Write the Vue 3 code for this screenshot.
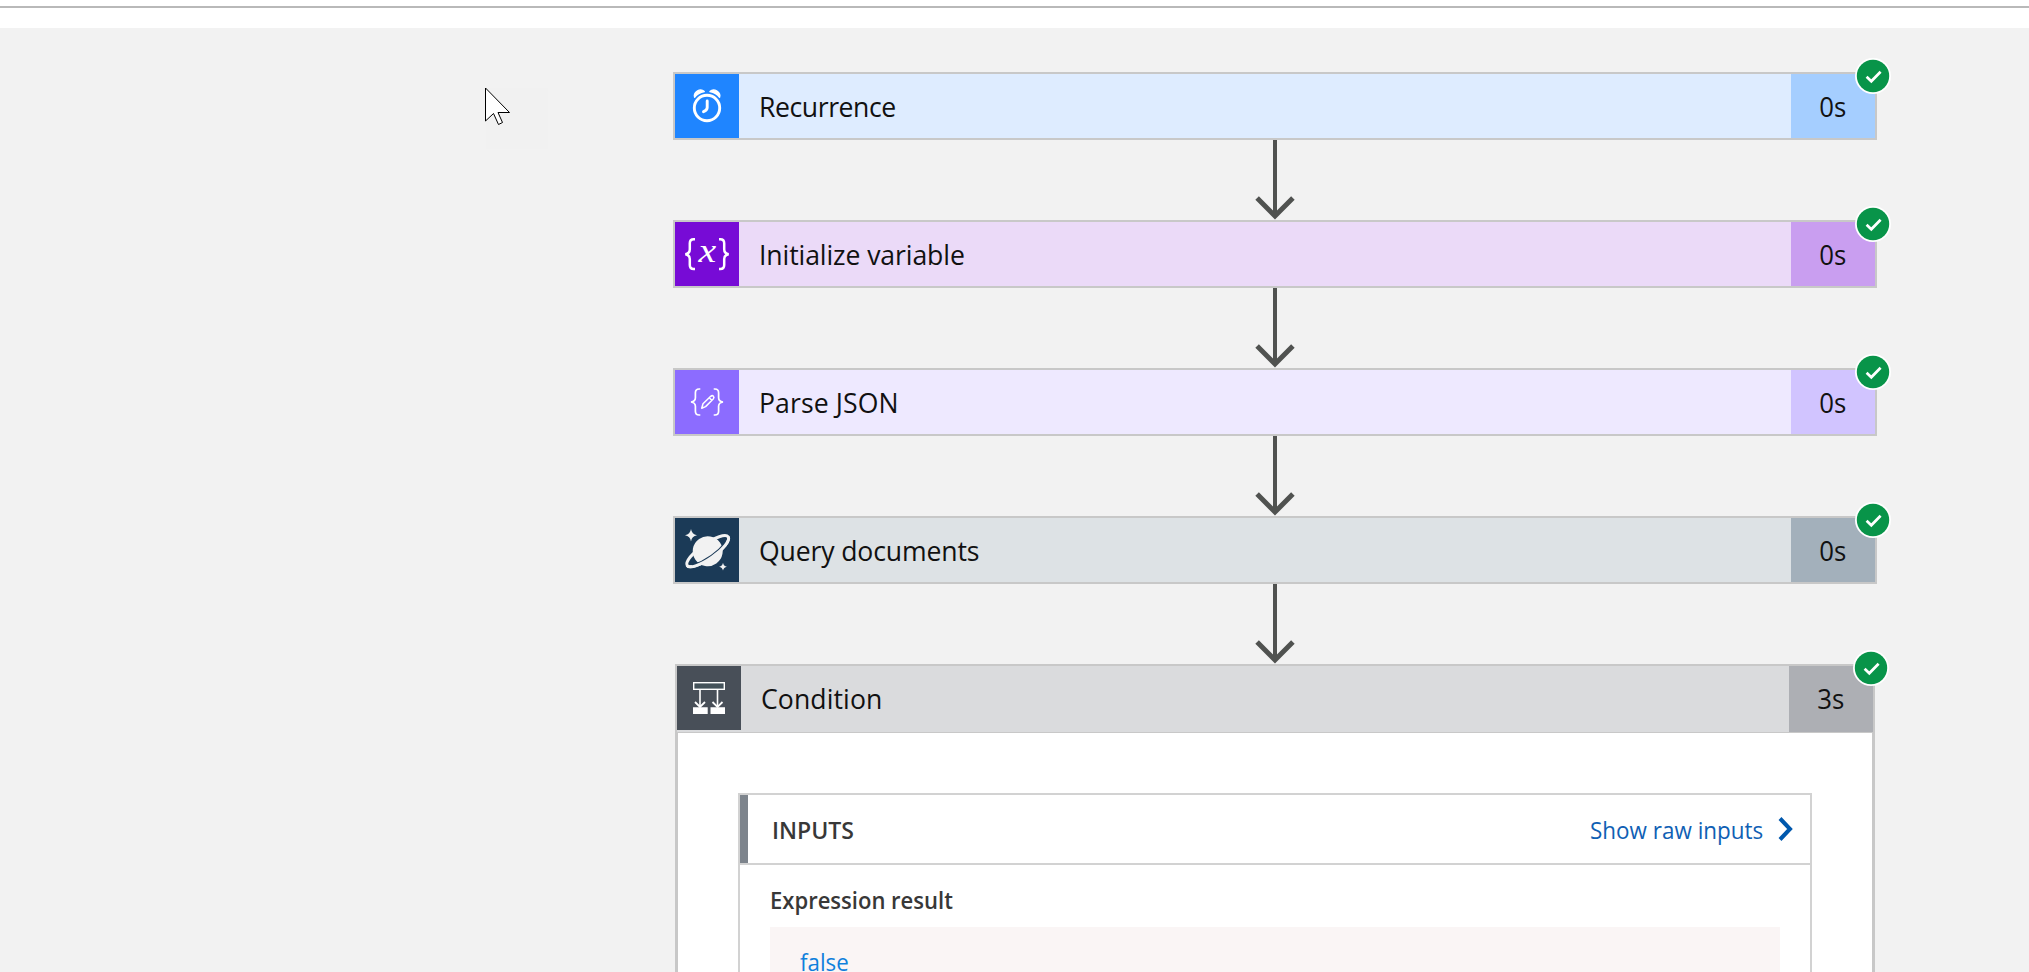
<script setup>
const steps = [
  { id: 'recurrence', title: 'Recurrence', time: '0s' },
  { id: 'variable', title: 'Initialize variable', time: '0s' },
  { id: 'json', title: 'Parse JSON', time: '0s' },
  { id: 'cosmos', title: 'Query documents', time: '0s' },
]
</script>

<template>
  <div class="page">
    <div class="topline"></div>
    <main class="canvas">
      <div class="flow">
        <template v-for="s in steps" :key="s.id">
          <section class="card" :class="s.id">
            <div class="icon">
              <svg v-if="s.id === 'recurrence'" width="64" height="64" viewBox="0 0 64 64" fill="none" stroke="#fff">
                <circle cx="32" cy="34" r="12.7" stroke-width="2.9" />
                <path d="M32.2 27v6.5q0 2.8-3.7 4.2" stroke-width="2.9" stroke-linecap="round" />
                <path d="M19.6 23.3C18 18.5 25 13.500 29.300 17.500C25.300 18.300 21.800 20.300 19.600 23.300Z M44.600 23.300C46.200 18.500 39.200 13.500 34.900 17.500C38.900 18.300 42.400 20.300 44.600 23.300Z" fill="#fff" stroke-width="1.300" stroke-linejoin="round" />
              </svg>
              <svg v-else-if="s.id === 'variable'" width="64" height="64" viewBox="0 0 64 64" fill="none" stroke="#fff" stroke-width="2.500">
                <path d="M20 17.300h-1.300q-3.900 0-3.900 4v6q0 4.300-4.500 4.900q4.500.6 4.500 4.900v6q0 4 3.900 4h1.300M44 17.300h1.300q3.900 0 3.900 4v6q0 4.300 4.500 4.900q-4.500.6-4.500 4.900v6q0 4-3.900 4h-1.300" />
                <text class="glyph" transform="translate(23.600 40) scale(1.170 1)">x</text>
              </svg>
              <svg v-else-if="s.id === 'json'" width="64" height="64" viewBox="0 0 64 64" fill="none" stroke="#fff" stroke-width="1.700">
                <path d="M25.300 19h-1.200q-3.700 0-3.700 3.800v4.900q0 3.700-4.400 4.300q4.400.6 4.400 4.300v4.900q0 3.800 3.700 3.800h1.200M38.700 19h1.200q3.700 0 3.700 3.800v4.900q0 3.700 4.400 4.300q-4.400.6-4.400 4.300v4.900q0 3.800-3.700 3.800h-1.200" />
                <path d="M26.700 38.200L28 33.800L35.700 26.300Q37.300 25 38.400 26.200Q39.600 27.500 38.200 29L30.600 36.600ZM34.300 27.800L36.800 30.300" stroke-width="1.500" stroke-linejoin="round" />
              </svg>
              <svg v-else width="64" height="64" viewBox="0 0 64 64" fill="none">
                <g transform="rotate(-35 32.700 33.200)">
                  <ellipse cx="32.700" cy="33.200" rx="25" ry="7.400" stroke="#f2f2f2" stroke-width="3" />
                  <circle cx="32.700" cy="33.200" r="15" fill="#f2f2f2" />
                  <path d="M12 36.200Q32.700 42 53.400 36.200" stroke="#1b3a57" stroke-width="2" />
                  <path d="M7.700 33.200A25 7.400 0 0 0 57.700 33.200" stroke="#f2f2f2" stroke-width="3" />
                </g>
                <path d="M16 11q.8 5.500 6 6.300q-5.200.8-6 6.300q-.8-5.500-6-6.300q5.200-.8 6-6.300ZM48 44.800q.6 3.300 3.900 3.900q-3.300.6-3.900 3.900q-.6-3.300-3.900-3.900q3.300-.6 3.900-3.900Z" fill="#f2f2f2" />
              </svg>
            </div>
            <div class="title"><span>{{ s.title }}</span></div>
            <div class="time"><span>{{ s.time }}</span></div>
            <svg class="badge" width="36" height="36" viewBox="0 0 36 36" fill="none">
              <circle cx="18" cy="18" r="18" fill="#fff" />
              <circle cx="18" cy="18" r="16.200" fill="#089449" />
              <path d="M11.600 18.800L16.300 23.300L25.600 13.700" stroke="#fff" stroke-width="2.700" />
            </svg>
          </section>
          <svg class="arrow" width="44" height="80" viewBox="0 0 44 80" fill="none" stroke="#505250">
            <path d="M22 0v77" stroke-width="4" />
            <path d="M4.100 58.100L22 76L39.900 58.100" stroke-width="5" />
          </svg>
        </template>

        <section class="scope">
          <header class="card condition">
            <div class="icon">
              <svg width="64" height="64" viewBox="0 0 64 64" fill="none" stroke="#fff">
                <rect x="16.700" y="16.700" width="30.600" height="6.600" stroke-width="1.400" fill="#44525a" />
                <path d="M23 24v17M40.500 24v17" stroke-width="1.600" />
                <path d="M18 36l5 5l5-5M35.500 36l5 5l5-5" stroke-width="1.800" />
                <path d="M16 41.300h14.700v6.700h-14.700zM33.500 41.300h14.500v6.700h-14.500z" fill="#fff" stroke="none" />
              </svg>
            </div>
            <div class="title"><span>Condition</span></div>
            <div class="time"><span>3s</span></div>
            <svg class="badge" width="36" height="36" viewBox="0 0 36 36" fill="none">
              <circle cx="18" cy="18" r="18" fill="#fff" />
              <circle cx="18" cy="18" r="16.200" fill="#089449" />
              <path d="M11.600 18.800L16.300 23.300L25.600 13.700" stroke="#fff" stroke-width="2.700" />
            </svg>
          </header>
          <div class="body">
            <div class="panel">
              <div class="phead">
                <span class="inputs">INPUTS</span>
                <a class="raw"><span>Show raw inputs</span>
                  <svg width="16" height="26" viewBox="0 0 16 26" fill="none" stroke="#0058ad" stroke-width="4"><path d="M2 2.500L12 13L2 23.500" /></svg>
                </a>
              </div>
              <div class="pbody">
                <div class="label"><span>Expression result</span></div>
                <div class="value"><span>false</span></div>
              </div>
            </div>
          </div>
        </section>
      </div>
      <div class="trail"></div>
      <svg class="cursor" width="30" height="42" viewBox="0 0 30 42">
        <path d="M1.500 1V34L9.500 26.500L14.500 37.500L18.500 35.500L14 25.500H25.500Z" fill="#fff" stroke="#000" stroke-width="1" />
      </svg>
    </main>
  </div>
</template>

<style>
body { margin: 0; overflow: hidden; }
</style>

<style scoped>
.page {
  height: 972px;
  overflow: hidden;
  background: #fff;
  font-family: "Open Sans", "Noto Sans", sans-serif;
  display: flex;
  flex-direction: column;
  box-sizing: border-box;
  padding-top: 6px;
}
.topline { height: 2px; flex: none; background: #b9b9b9; margin-bottom: 20px; }
.canvas { flex: 1; min-height: 0; background: #f2f2f2; position: relative; overflow: hidden; }
.flow {
  width: 1204px;
  margin-left: 673px;
  padding-top: 44px;
  display: flex;
  flex-direction: column;
  align-items: center;
}
.card {
  width: 100%;
  height: 68px;
  box-sizing: border-box;
  border: 2px solid #c8c8c8;
  display: flex;
  position: relative;
  flex: none;
}
.icon { width: 64px; height: 64px; flex: none; }
.icon svg { display: block; }
.glyph { font: italic 34px "Liberation Serif", serif; fill: #fff; stroke: none; }
.title { flex: 1; display: flex; align-items: center; padding-left: 20px; font-size: 28px; color: #111; white-space: nowrap; }
.title span, .label span, .value span, .inputs { display: inline-block; transform: scaleX(.95); transform-origin: left center; }
.time { width: 84px; display: flex; align-items: center; justify-content: center; font-size: 28px; color: #111; }
.time span { transform: scaleX(.92); }
.badge { position: absolute; right: -16px; top: -16px; }
.arrow { display: block; flex: none; }

.recurrence { background: #deecff; }
.recurrence .icon { background: #1f85ff; }
.recurrence .time { background: #a5ceff; }
.recurrence .title { letter-spacing: -.45px; }
.variable { background: #ebdaf8; }
.variable .icon { background: #770bd6; }
.variable .time { background: #c99ef0; }
.variable .title { letter-spacing: -.1px; }
.json { background: #eee9ff; }
.json .icon { background: #8c6cff; }
.json .time { background: #d1c4ff; }
.json .title { letter-spacing: .12px; }
.cosmos { background: #dde2e5; }
.cosmos .icon { background: #1b3a57; }
.cosmos .time { background: #a3b0bb; }
.cosmos .title { letter-spacing: -.15px; }

.scope { width: 1200px; }
.condition { height: 69px; border-bottom-width: 1px; background: #dadbdd; }
.condition .icon { background: #484f58; }
.condition .time { background: #adafb4; }
.condition .title, .condition .time { padding-bottom: 2px; }
.condition .title { letter-spacing: .1px; }
.body { border: solid #c8c8c8; border-width: 0 3px; background: #fff; padding: 60px 60px 0; height: 300px; }
.panel { border: 2px solid #d2d2d2; height: 300px; }
.phead {
  height: 68px;
  border-bottom: 2px solid #d2d2d2;
  display: flex;
  align-items: center;
  justify-content: space-between;
  padding: 0 16px 0 32px;
  box-shadow: inset 8px 0 #7d848c;
}
.inputs { font-size: 24px; font-weight: 600; color: #383838; transform: scaleX(.96); }
.raw { display: flex; align-items: center; gap: 15px; font-size: 24px; color: #0f60b4; }
.raw span { transform: scaleX(.935); transform-origin: right center; }
.pbody { padding: 17px 30px 0; }
.label { font-size: 24px; line-height: 36px; font-weight: 600; color: #383838; }
.label span { transform: scaleX(.918); }
.value { margin-top: 9px; padding: 17px 30px; height: 80px; background: #faf5f5; font-size: 24px; line-height: 36px; color: #0f80dc; }
.value span { transform: scaleX(.93); }
.trail { position: absolute; left: 486px; top: 60px; width: 62px; height: 61px; background: #f1f1f1; }
.cursor { position: absolute; left: 484px; top: 59px; }
</style>
